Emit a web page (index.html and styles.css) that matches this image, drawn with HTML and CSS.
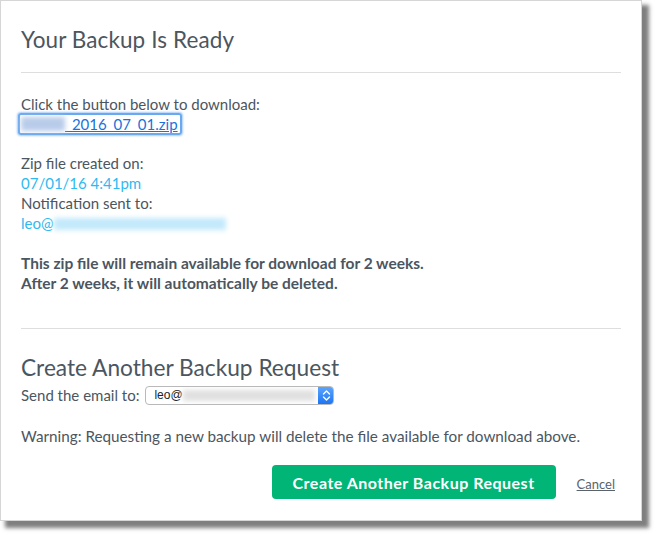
FILE: index.html
```html
<!DOCTYPE html>
<html>
<head>
<meta charset="utf-8">
<link rel="stylesheet" href="styles.css">
</head>
<body>
<div class="dialog">
  <h1 class="title">Your Backup Is Ready</h1>
  <hr class="rule">
  <div class="section download">
    <p class="line">Click the button below to download:</p>
    <a class="file-link" href="#"><span class="blur blur-link"></span>_2016_07_01.zip</a>
  </div>
  <div class="section info">
    <p class="line">Zip file created on:</p>
    <p class="line blue">07/01/16 4:41pm</p>
    <p class="line">Notification sent to:</p>
    <p class="line blue">leo@<span class="blur blur-email"></span></p>
  </div>
  <div class="section notice">
    <p class="line strong">This zip file will remain available for download for 2 weeks.</p>
    <p class="line strong">After 2 weeks, it will automatically be deleted.</p>
  </div>
  <hr class="rule rule2">
  <h2 class="subtitle">Create Another Backup Request</h2>
  <div class="send-row">
    <span class="line">Send the email to:</span>
    <div class="select">
      <span class="select-text">leo@</span><span class="blur blur-select"></span>
      <span class="stepper">
        <svg width="9" height="13" viewBox="0 0 9 13"><path d="M1.5 5 L4.5 2 L7.5 5 M1.5 8 L4.5 11 L7.5 8" fill="none" stroke="#fff" stroke-width="1.4" stroke-linecap="round" stroke-linejoin="round"/></svg>
      </span>
    </div>
  </div>
  <p class="line warning">Warning: Requesting a new backup will delete the file available for download above.</p>
  <div class="actions">
    <button class="btn">Create Another Backup Request</button>
    <a class="cancel" href="#">Cancel</a>
  </div>
</div>
</body>
</html>
```
FILE: styles.css
```css
html, body {
  margin: 0;
  padding: 0;
  background: #fff;
}
body {
  font-family: Lato, "Open Sans", sans-serif;
  color: #4b5660;
  min-height: 535px;
}
.dialog {
  box-sizing: border-box;
  width: 642px;
  height: 521px;
  background: #fff;
  border: 1px solid #d6d6d6;
  box-shadow: 6px 6px 4px 1px rgba(0, 0, 0, 0.5);
  padding: 0 20px 0 20px;
}
.title {
  margin: 25px 0 0 0;
  font-size: 22.5px;
  font-weight: 400;
  line-height: 28px;
  letter-spacing: 0.1px;
}
.rule {
  border: 0;
  border-top: 1.5px solid #dedede;
  margin: 18px 0 0 0;
  width: 600px;
}
.section {
  margin-top: 20px;
}
.download {
  display: flex;
  flex-direction: column;
  align-items: flex-start;
  margin-top: 21px;
}
.line {
  margin: 0;
  font-size: 15px;
  line-height: 20px;
}
.file-link {
  display: flex;
  align-items: center;
  margin-left: -3px;
  margin-top: -1px;
  height: 18px;
  padding: 0 2px 0 1px;
  border: 2px solid #6aa8f0;
  border-radius: 3px;
  box-shadow: 0 0 2px 1px rgba(106, 168, 240, 0.6);
  color: #1a73d9;
  font-size: 15px;
  line-height: 18px;
  text-decoration: underline;
}
.blur {
  display: inline-block;
  filter: blur(2.5px);
}
.blur-link {
  width: 44px;
  height: 14px;
  background: #b8ccea;
}
.info {
  margin-top: 18px;
}
.blue {
  color: #2fb9f0;
}
.blur-email {
  width: 172px;
  height: 12px;
  background: #c3e9fb;
  vertical-align: -1px;
}
.notice {
  margin-top: 20px;
}
.strong {
  font-weight: 700;
  font-size: 15.5px;
}
.rule2 {
  margin-top: 35px;
}
.subtitle {
  margin: 26px 0 0 0;
  font-size: 22.7px;
  font-weight: 400;
  line-height: 26px;
}
.send-row {
  display: flex;
  align-items: center;
  gap: 6px;
  margin-top: 4px;
}
.select {
  box-sizing: border-box;
  width: 189px;
  height: 19px;
  border: 1px solid #b9b9b9;
  border-radius: 4px;
  display: flex;
  align-items: center;
  padding-left: 8px;
  position: relative;
  font-family: "Liberation Sans", Arial, sans-serif;
  font-size: 12px;
  color: #222;
  overflow: hidden;
}
.blur-select {
  width: 132px;
  height: 11px;
  background: #e0e0e0;
}
.stepper {
  position: absolute;
  right: -1px;
  top: -1px;
  width: 16px;
  height: 19px;
  border-radius: 0 4px 4px 0;
  background: linear-gradient(#5ea7ff, #1a72f2);
  display: flex;
  align-items: center;
  justify-content: center;
}
.warning {
  margin-top: 21px;
  font-size: 15.25px;
}
.actions {
  display: flex;
  justify-content: flex-end;
  align-items: center;
  margin-top: 19px;
  padding-right: 6px;
}
.btn {
  width: 284px;
  height: 34px;
  border: 0;
  border-radius: 4px;
  background: #00b576;
  color: #fff;
  font-family: Lato, "Open Sans", sans-serif;
  font-weight: 700;
  font-size: 16px;
  letter-spacing: 0.5px;
  padding: 0;
}
.cancel {
  margin-left: 21px;
  margin-top: 3px;
  color: #5a636b;
  font-size: 13px;
  text-decoration: underline;
}
```
